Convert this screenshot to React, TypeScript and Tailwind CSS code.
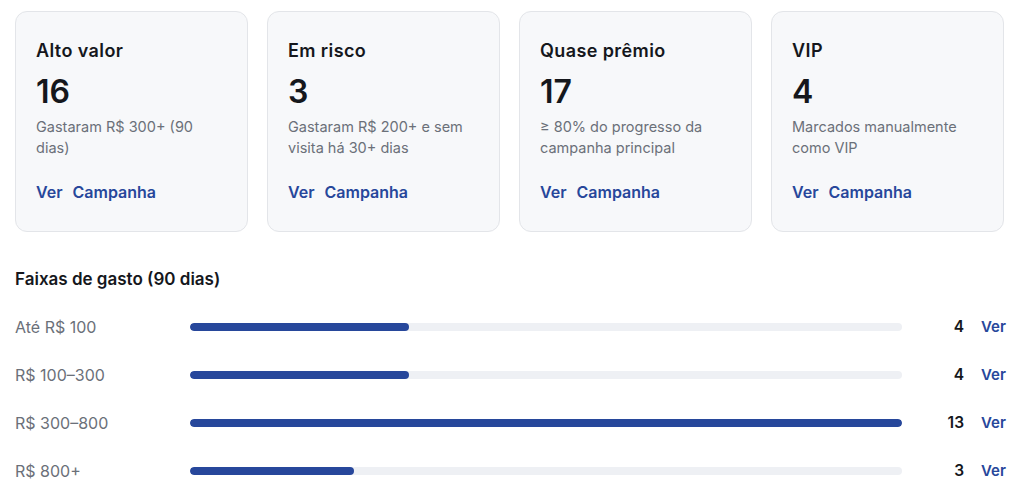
import React from "react";

const cards = [
  { title: "Alto valor", value: "16", desc: "Gastaram R$ 300+ (90 dias)" },
  { title: "Em risco", value: "3", desc: "Gastaram R$ 200+ e sem visita há 30+ dias" },
  { title: "Quase prêmio", value: "17", desc: "≥ 80% do progresso da campanha principal" },
  { title: "VIP", value: "4", desc: "Marcados manualmente como VIP" },
];

const bands = [
  { label: "Até R$ 100", count: 4 },
  { label: "R$ 100–300", count: 4 },
  { label: "R$ 300–800", count: 13 },
  { label: "R$ 800+", count: 3 },
];

export default function App() {
  const max = 13;
  return (
    <div className="w-[1024px] h-[503px] bg-white overflow-hidden pl-[15px] pr-[20px] pt-[11px]" style={{ fontFamily: "Inter, 'Noto Sans', sans-serif" }}>
      <div className="grid grid-cols-4 gap-[19px]">
        {cards.map((c) => (
          <div key={c.title} className="h-[221px] rounded-[12px] border border-[#e3e5e9] bg-[#f7f8fa] px-[20px] pt-[27px]">
            <div className="text-[18px] leading-[24px] font-semibold text-[#15171c] tracking-[0.4px]">{c.title}</div>
            <div className="mt-[10px] text-[32px] leading-[38px] font-semibold text-[#15171c]">{c.value}</div>
            <div className="mt-[5px] h-[42px] text-[14.5px] leading-[21px] text-[#6b7079] pr-[8px]">{c.desc}</div>
            <div className="mt-[24px] flex gap-[10px] text-[16px] leading-[20px] font-semibold text-[#27479b]">
              <span>Ver</span>
              <span>Campanha</span>
            </div>
          </div>
        ))}
      </div>
      <div className="mt-[36px] text-[17px] leading-[22px] font-semibold text-[#15171c]">Faixas de gasto (90 dias)</div>
      <div className="mt-[13px] flex flex-col">
        {bands.map((b) => (
          <div key={b.label} className="h-[48px] flex items-center">
            <div className="w-[175px] shrink-0 text-[16px] text-[#6b7079]">{b.label}</div>
            <div className="w-[712px] shrink-0 h-[8px] rounded-full bg-[#eef0f4] overflow-hidden">
              <div className="h-full rounded-full bg-[#27479b]" style={{ width: `${(b.count / max) * 100}%` }} />
            </div>
            <div className="w-[62px] shrink-0 text-right text-[15.5px] font-semibold text-[#15171c]">{b.count}</div>
            <div className="ml-[17px] shrink-0 whitespace-nowrap text-[15px] font-semibold text-[#27479b]">Ver</div>
          </div>
        ))}
      </div>
    </div>
  );
}
